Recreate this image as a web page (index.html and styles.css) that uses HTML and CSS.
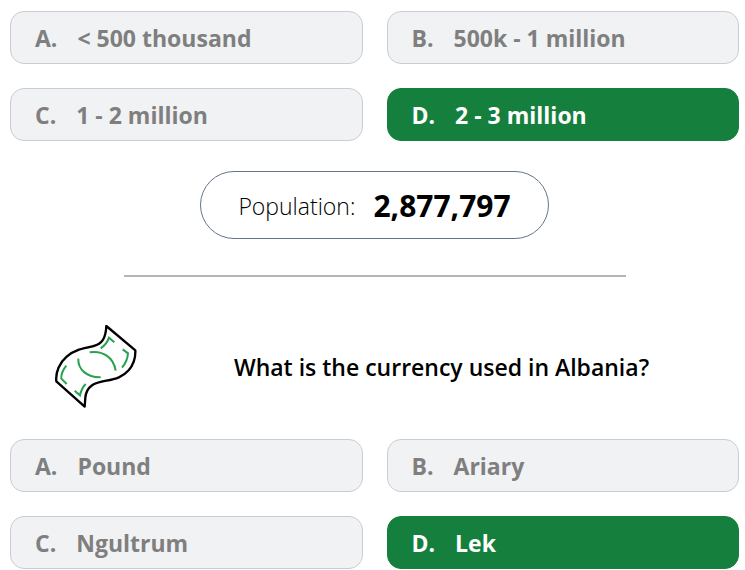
FILE: index.html
```
<!DOCTYPE html>
<html lang="en">
<head>
  <meta charset="UTF-8">
  <meta name="viewport" content="width=device-width, initial-scale=1.0">
  <title>Country Quiz</title>
  <link rel="stylesheet" href="styles.css">
</head>
<body>
  <main class="quiz">
    <section class="options">
      <button class="option" type="button" disabled><span>A.</span><span>&lt; 500 thousand</span></button>
      <button class="option" type="button" disabled><span>B.</span><span>500k - 1 million</span></button>
      <button class="option" type="button" disabled><span>C.</span><span>1 - 2 million</span></button>
      <button class="option correct" type="button" disabled><span>D.</span><span>2 - 3 million</span></button>
    </section>

    <p class="answer">Population: <strong>2,877,797</strong></p>

    <hr class="divider">

    <div class="question">
      <!-- banknote -->
      <svg class="question-icon" viewBox="0 0 252 252" fill="none" stroke-width="7" aria-hidden="true">
        <g stroke="#000" stroke-linejoin="round">
          <path d="M157 3 L244 76 C245 100 239 119 224 136 C206 156 186 162 157 167 C119 173 97 185 94 218 L92 245 L7 169 C4 141 17 113 38 95 C62 74 90 69 119 63 C143 57 155 42 157 3Z"/>
        </g>
        <g stroke="#27a34f" stroke-width="6">
          <path d="M107 82 C145 76 179 96 185 137"/>
          <path d="M73 101 C71 133 99 158 140 157"/>
          <path d="M140 70 C152 62 161 51 165 38 L181 52"/>
          <path d="M206 73 L222 85 C221 101 215 115 204 128"/>
          <path d="M37 122 C27 134 21 147 22 161 L38 177"/>
          <path d="M62 197 L78 211 C81 197 85 187 95 177"/>
        </g>
      </svg>
      <h2 class="question-text">What is the currency used in Albania?</h2>
    </div>

    <section class="options">
      <button class="option" type="button" disabled><span>A.</span><span>Pound</span></button>
      <button class="option" type="button" disabled><span>B.</span><span>Ariary</span></button>
      <button class="option" type="button" disabled><span>C.</span><span>Ngultrum</span></button>
      <button class="option correct" type="button" disabled><span>D.</span><span>Lek</span></button>
    </section>
  </main>
</body>
</html>
```

FILE: styles.css
```
body {
  --option-bg: #f1f2f4;
  --option-border: #c9ccd2;
  --option-text: #7f7f7f;
  --correct: #15803d;

  margin: 0;
  background-color: #fff;
  color: #000;
  font-family: "Segoe UI", "Open Sans", "Noto Sans", sans-serif;
  font-size: 23px;
  line-height: 32px;
}

.quiz {
  padding: 11px 6px 0 10px;
}

/* Answer buttons */
.options {
  display: grid;
  grid-template-columns: 1fr 1fr;
  gap: 24px;
}
.option {
  display: flex;
  align-items: center;
  gap: 20px;
  padding: 11px 24px 9px;
  border: 1px solid var(--option-border);
  border-radius: 14px;
  background-color: var(--option-bg);
  color: var(--option-text);
  font: inherit;
  font-weight: 700;
  line-height: 31px;
  text-align: left;
}
.option.correct {
  border-color: var(--correct);
  background-color: var(--correct);
  color: #fff;
}

.answer {
  display: flex;
  align-items: center;
  justify-content: center;
  gap: 18px;
  width: fit-content;
  margin: 30px auto 36px;
  padding: 18px 37px 16px;
  border: 1px solid #64748b;
  border-radius: 34px;
  font-weight: 300;
}
.answer strong {
  font-size: 30px;
  font-weight: 700;
}

.divider {
  max-width: 502px;
  margin: 0 auto;
  border: 0;
  border-top: 2px solid #b5b5b5;
}

.question {
  display: flex;
  align-items: center;
  gap: 32px;
  margin: 48px 26px 30px 44px;
}
.question-icon {
  flex: none;
  width: 84px;
  height: 84px;
}
.question-text {
  flex: 1;
  margin: 0;
  font-size: 23px;
  font-weight: 600;
  text-align: center;
}
```
